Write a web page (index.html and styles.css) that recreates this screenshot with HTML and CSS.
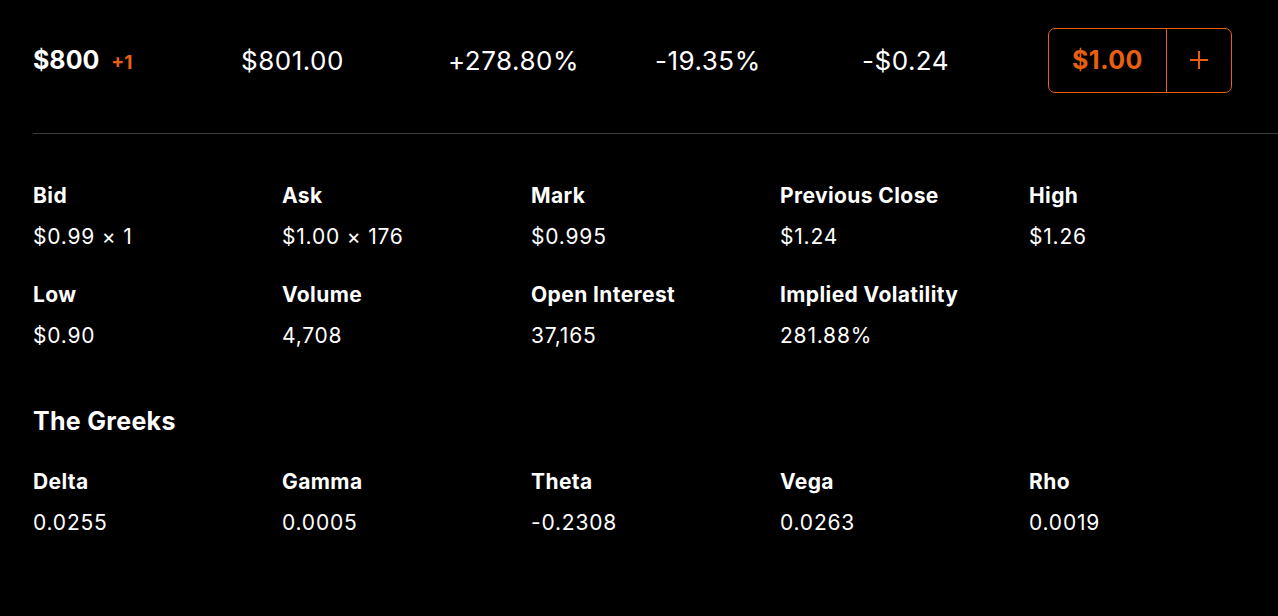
FILE: index.html
```html
<!DOCTYPE html>
<html>
<head>
<meta charset="utf-8">
<link rel="stylesheet" href="styles.css">
</head>
<body>
<div class="page">
  <div class="header">
    <div class="hcol strike"><span class="strike-price">$800</span><span class="strike-delta">+1</span></div>
    <div class="hcol">$801.00</div>
    <div class="hcol">+278.80%</div>
    <div class="hcol">-19.35%</div>
    <div class="hcol">-$0.24</div>
    <div class="btn">
      <div class="btn-price">$1.00</div>
      <div class="btn-plus"><svg width="20" height="20" viewBox="0 0 20 20"><path d="M10 1V19M1 10H19" stroke="#e8600f" stroke-width="2" fill="none"/></svg></div>
    </div>
  </div>
  <div class="divider"></div>
  <div class="grid stats">
    <div class="cell"><div class="label">Bid</div><div class="value">$0.99 × 1</div></div>
    <div class="cell"><div class="label">Ask</div><div class="value">$1.00 × 176</div></div>
    <div class="cell"><div class="label">Mark</div><div class="value">$0.995</div></div>
    <div class="cell"><div class="label">Previous Close</div><div class="value">$1.24</div></div>
    <div class="cell"><div class="label">High</div><div class="value">$1.26</div></div>
    <div class="cell"><div class="label">Low</div><div class="value">$0.90</div></div>
    <div class="cell"><div class="label">Volume</div><div class="value">4,708</div></div>
    <div class="cell"><div class="label">Open Interest</div><div class="value">37,165</div></div>
    <div class="cell"><div class="label">Implied Volatility</div><div class="value">281.88%</div></div>
  </div>
  <h2 class="section">The Greeks</h2>
  <div class="grid greeks">
    <div class="cell"><div class="label">Delta</div><div class="value">0.0255</div></div>
    <div class="cell"><div class="label">Gamma</div><div class="value">0.0005</div></div>
    <div class="cell"><div class="label">Theta</div><div class="value">-0.2308</div></div>
    <div class="cell"><div class="label">Vega</div><div class="value">0.0263</div></div>
    <div class="cell"><div class="label">Rho</div><div class="value">0.0019</div></div>
  </div>
</div>
</body>
</html>
```

FILE: styles.css
```css
html, body {
  margin: 0;
  padding: 0;
  background: #000;
}
body {
  width: 1278px;
  height: 616px;
  overflow: hidden;
  font-family: Inter, "Liberation Sans", Arial, sans-serif;
  color: #fff;
}
.page {
  padding-left: 33px;
}
.header {
  display: flex;
  align-items: center;
  height: 66px;
  padding-top: 27px;
  padding-bottom: 40px;
}
.hcol {
  width: 207px;
  font-size: 26px;
  font-weight: 400;
  letter-spacing: 0.5px;
  flex: none;
}
.hcol.strike {
  width: 208px;
  display: flex;
  align-items: baseline;
}
.strike-price {
  font-size: 25px;
  font-weight: 700;
  letter-spacing: 0;
}
.strike-delta {
  font-size: 19px;
  font-weight: 700;
  color: #e8600f;
  margin-left: 12px;
  letter-spacing: 0;
}
.btn {
  margin-left: -21px;
  display: flex;
  width: 184px;
  height: 65px;
  box-sizing: border-box;
  border: 1.5px solid #e8600f;
  border-radius: 7px;
}
.btn-price {
  width: 117px;
  display: flex;
  align-items: center;
  justify-content: center;
  color: #e8600f;
  font-size: 25px;
  font-weight: 700;
  letter-spacing: 0.5px;
  border-right: 1.5px solid #e8600f;
}
.btn-plus {
  flex: 1;
  display: flex;
  align-items: center;
  justify-content: center;
}
.divider {
  height: 1px;
  background: #3b3b3b;
}
.grid {
  display: grid;
  grid-template-columns: repeat(5, 249px);
  row-gap: 34px;
}
.stats {
  padding-top: 50px;
}
.label {
  font-size: 21px;
  font-weight: 700;
  line-height: 24px;
  letter-spacing: 0.4px;
}
.value {
  font-size: 21px;
  font-weight: 400;
  line-height: 24px;
  margin-top: 17px;
  letter-spacing: 0.8px;
}
.section {
  margin: 0;
  padding-top: 58px;
  font-size: 25px;
  font-weight: 700;
  line-height: 30px;
  letter-spacing: 0.3px;
}
.greeks {
  padding-top: 34px;
}
```
